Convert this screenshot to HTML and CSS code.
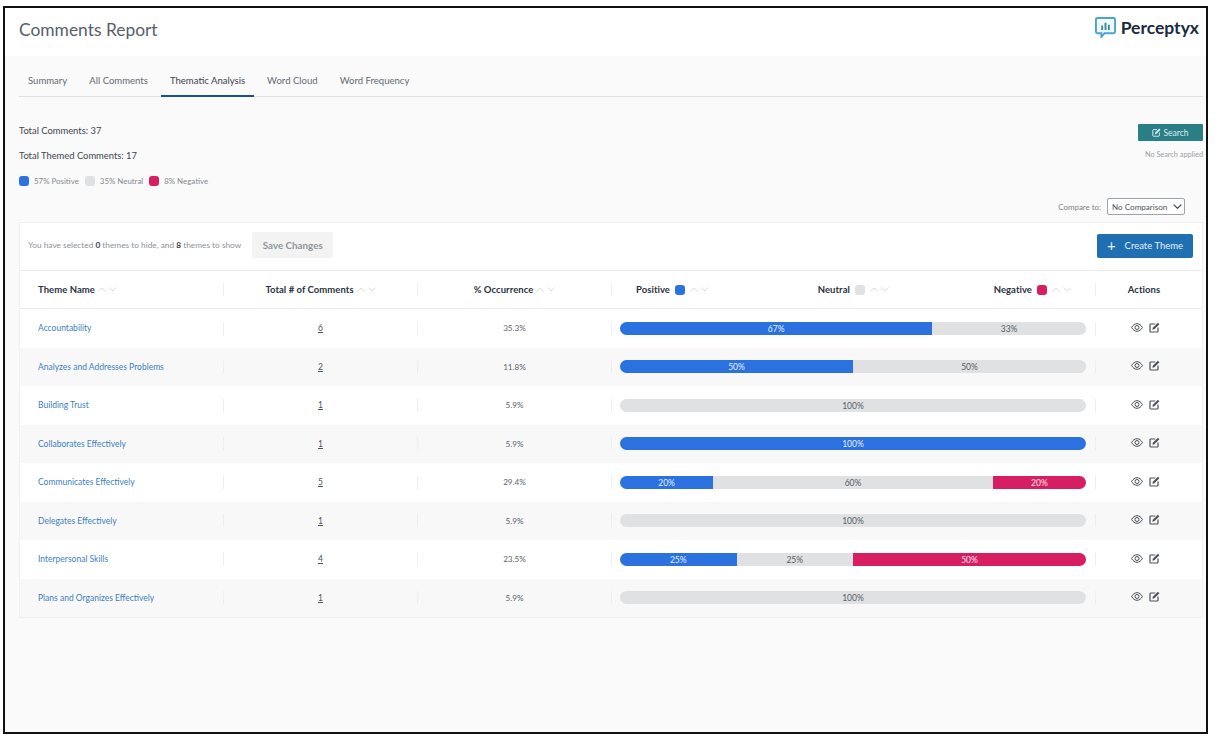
FILE: index.html
```html
<!DOCTYPE html>
<html lang="en">
<head>
<meta charset="utf-8">
<title>Comments Report</title>
<link rel="stylesheet" href="styles.css">
</head>
<body>
<svg class="defs" width="0" height="0" aria-hidden="true">
  <defs>
    <symbol id="up" viewBox="0 0 9 5"><path d="M.5 4.500 4.500.8l4 3.700" fill="none" stroke="currentColor" stroke-width="1"/></symbol>
    <symbol id="down" viewBox="0 0 9 5"><path d="M.5.5l4 3.700 4-3.700" fill="none" stroke="currentColor" stroke-width="1"/></symbol>
    <symbol id="eye" viewBox="0 0 12 9"><path d="M.6 4.500C2 2 3.800.7 6 .7s4 1.300 5.400 3.800C10 7 8.200 8.300 6 8.300S2 7 .6 4.500Z" fill="none" stroke="currentColor" stroke-width="1"/><circle cx="6" cy="4.500" r="2" fill="none" stroke="currentColor" stroke-width="1"/></symbol>
    <symbol id="edit" viewBox="0 0 11 11"><path d="M6.300 2H1.800a.8.8 0 0 0-.8.800v6.400a.8.8 0 0 0 .8.800h6.400a.8.800 0 0 0 .8-.8V5.500" fill="none" stroke="currentColor" stroke-width="1.200"/><path d="M3.800 5.800 8.900.7l1.500 1.500-5.100 5.100-1.900.4Z" fill="currentColor"/></symbol>
  </defs>
</svg>
<div class="frame">
  <header class="top">
    <h1 class="title">Comments Report</h1>
    <div class="logo">
      <svg class="logo-mark" viewBox="0 0 22 22" aria-hidden="true">
        <path d="M2.500 1h17A1.500 1.500 0 0 1 21 2.500v13a1.500 1.500 0 0 1-1.500 1.500H10l-3.300 4v-4H2.500A1.500 1.500 0 0 1 1 15.500v-13A1.500 1.500 0 0 1 2.500 1Z" fill="#f1f8fb" stroke="#4aa5c8" stroke-width="2"/>
        <path d="M6.500 9h2v4.500h-2zM10 6h2v7.500h-2zM13.500 8h2v5.500h-2z" fill="#3f8a96"/>
      </svg>
      <span class="logo-text">Perceptyx</span>
    </div>
  </header>
  <main class="main">
    <nav class="tabs">
      <a class="tab">Summary</a>
      <a class="tab">All Comments</a>
      <a class="tab active">Thematic Analysis</a>
      <a class="tab">Word Cloud</a>
      <a class="tab">Word Frequency</a>
    </nav>
    <section class="summary">
      <div class="totals">
        <p class="total">Total Comments: 37</p>
        <p class="total">Total Themed Comments: 17</p>
        <div class="legend">
          <span class="legend-item"><i class="swatch pos"></i>57% Positive</span>
          <span class="legend-item"><i class="swatch neu"></i>35% Neutral</span>
          <span class="legend-item"><i class="swatch neg"></i>8% Negative</span>
        </div>
      </div>
      <div class="search-box">
        <button class="search-btn"><svg class="i-search"><use href="#edit"/></svg>Search</button>
        <span class="search-note">No Search applied</span>
      </div>
    </section>
    <div class="compare">
      <span class="compare-label">Compare to:</span>
      <div class="select">No Comparison<svg class="select-caret" viewBox="0 0 9 5"><path d="M.6.6l3.900 3.700L8.400.6" fill="none" stroke="currentColor" stroke-width="1.200"/></svg></div>
    </div>
    <section class="card">
      <div class="toolbar">
        <span class="tool-note">You have selected <b>0</b> themes to hide, and <b>8</b> themes to show</span>
        <button class="save-btn">Save Changes</button>
        <button class="create-btn"><span class="plus">+</span>Create Theme</button>
      </div>
      <div class="row head">
        <div class="cell name-cell"><span class="th">Theme Name</span><span class="sort"><svg><use href="#up"/></svg><svg><use href="#down"/></svg></span></div>
        <div class="cell center sep"><span class="th">Total # of Comments</span><span class="sort"><svg><use href="#up"/></svg><svg><use href="#down"/></svg></span></div>
        <div class="cell center sep"><span class="th">% Occurrence</span><span class="sort"><svg><use href="#up"/></svg><svg><use href="#down"/></svg></span></div>
        <div class="cell sep bars-head">
          <span class="bh"><span class="th">Positive</span><i class="swatch pos"></i><span class="sort"><svg><use href="#up"/></svg><svg><use href="#down"/></svg></span></span>
          <span class="bh"><span class="th">Neutral</span><i class="swatch neu"></i><span class="sort"><svg><use href="#up"/></svg><svg><use href="#down"/></svg></span></span>
          <span class="bh"><span class="th">Negative</span><i class="swatch neg"></i><span class="sort"><svg><use href="#up"/></svg><svg><use href="#down"/></svg></span></span>
        </div>
        <div class="cell center sep act-head"><span class="th">Actions</span></div>
      </div>

      <div class="row">
        <div class="cell name-cell"><a class="theme">Accountability</a></div>
        <div class="cell center sep"><a class="count">6</a></div>
        <div class="cell center sep occ">35.3%</div>
        <div class="cell sep bar-cell"><div class="bar"><span class="seg pos" style="width:67%">67%</span><span class="seg neu" style="width:33%">33%</span></div></div>
        <div class="cell center sep acts"><svg class="i-eye"><use href="#eye"/></svg><svg class="i-edit"><use href="#edit"/></svg></div>
      </div>
      <div class="row alt">
        <div class="cell name-cell"><a class="theme">Analyzes and Addresses Problems</a></div>
        <div class="cell center sep"><a class="count">2</a></div>
        <div class="cell center sep occ">11.8%</div>
        <div class="cell sep bar-cell"><div class="bar"><span class="seg pos" style="width:50%">50%</span><span class="seg neu" style="width:50%">50%</span></div></div>
        <div class="cell center sep acts"><svg class="i-eye"><use href="#eye"/></svg><svg class="i-edit"><use href="#edit"/></svg></div>
      </div>
      <div class="row">
        <div class="cell name-cell"><a class="theme">Building Trust</a></div>
        <div class="cell center sep"><a class="count">1</a></div>
        <div class="cell center sep occ">5.9%</div>
        <div class="cell sep bar-cell"><div class="bar"><span class="seg neu" style="width:100%">100%</span></div></div>
        <div class="cell center sep acts"><svg class="i-eye"><use href="#eye"/></svg><svg class="i-edit"><use href="#edit"/></svg></div>
      </div>
      <div class="row alt">
        <div class="cell name-cell"><a class="theme">Collaborates Effectively</a></div>
        <div class="cell center sep"><a class="count">1</a></div>
        <div class="cell center sep occ">5.9%</div>
        <div class="cell sep bar-cell"><div class="bar"><span class="seg pos" style="width:100%">100%</span></div></div>
        <div class="cell center sep acts"><svg class="i-eye"><use href="#eye"/></svg><svg class="i-edit"><use href="#edit"/></svg></div>
      </div>
      <div class="row">
        <div class="cell name-cell"><a class="theme">Communicates Effectively</a></div>
        <div class="cell center sep"><a class="count">5</a></div>
        <div class="cell center sep occ">29.4%</div>
        <div class="cell sep bar-cell"><div class="bar"><span class="seg pos" style="width:20%">20%</span><span class="seg neu" style="width:60%">60%</span><span class="seg neg" style="width:20%">20%</span></div></div>
        <div class="cell center sep acts"><svg class="i-eye"><use href="#eye"/></svg><svg class="i-edit"><use href="#edit"/></svg></div>
      </div>
      <div class="row alt">
        <div class="cell name-cell"><a class="theme">Delegates Effectively</a></div>
        <div class="cell center sep"><a class="count">1</a></div>
        <div class="cell center sep occ">5.9%</div>
        <div class="cell sep bar-cell"><div class="bar"><span class="seg neu" style="width:100%">100%</span></div></div>
        <div class="cell center sep acts"><svg class="i-eye"><use href="#eye"/></svg><svg class="i-edit"><use href="#edit"/></svg></div>
      </div>
      <div class="row">
        <div class="cell name-cell"><a class="theme">Interpersonal Skills</a></div>
        <div class="cell center sep"><a class="count">4</a></div>
        <div class="cell center sep occ">23.5%</div>
        <div class="cell sep bar-cell"><div class="bar"><span class="seg pos" style="width:25%">25%</span><span class="seg neu" style="width:25%">25%</span><span class="seg neg" style="width:50%">50%</span></div></div>
        <div class="cell center sep acts"><svg class="i-eye"><use href="#eye"/></svg><svg class="i-edit"><use href="#edit"/></svg></div>
      </div>
      <div class="row alt">
        <div class="cell name-cell"><a class="theme">Plans and Organizes Effectively</a></div>
        <div class="cell center sep"><a class="count">1</a></div>
        <div class="cell center sep occ">5.9%</div>
        <div class="cell sep bar-cell"><div class="bar"><span class="seg neu" style="width:100%">100%</span></div></div>
        <div class="cell center sep acts"><svg class="i-eye"><use href="#eye"/></svg><svg class="i-edit"><use href="#edit"/></svg></div>
      </div>
    </section>
  </main>
</div>
</body>
</html>
```
FILE: styles.css
```css
* { box-sizing: border-box; }
html, body { height: 100%; }
body {
  margin: 0;
  padding: 6px 0 0 3px;
  background: #fff;
  font-family: "Lato", "Liberation Sans", sans-serif;
  color: #4a5058;
  overflow: hidden;
}
.defs { position: absolute; }
.frame {
  width: 1205px;
  height: 728px;
  border: 2px solid #111;
  display: flex;
  flex-direction: column;
  background: #fafafa;
}
.top {
  height: 48px;
  flex: none;
  background: #fff;
  display: flex;
  align-items: center;
  justify-content: space-between;
  padding: 0 7px 5px 14px;
}
.title {
  margin: 0;
  font-size: 17.400px;
  font-weight: 400;
  color: #56606b;
}
.logo { display: flex; align-items: center; gap: 5px; margin-bottom: 5px; }
.logo-mark { width: 21px; height: 21px; }
.logo-text { font-size: 17.500px; font-weight: 700; color: #1b2a40; }
.main { flex: 1; padding: 0 3px 0 14px; }
.tabs {
  display: flex;
  gap: 4px;
  height: 41px;
  border-bottom: 1px solid #dfe1e3;
}
.tab {
  height: 41px;
  padding: 15.500px 9px 0;
  font-size: 9.550px;
  line-height: 18px;
  color: #636a73;
}
.tab.active { color: #3c4450; border-bottom: 2px solid #15508f; }
.summary {
  display: flex;
  justify-content: space-between;
  padding-top: 25px;
}
.total {
  margin: 0 0 7px;
  font-size: 9.400px;
  line-height: 18px;
  color: #3e4650;
}
.legend { display: flex; gap: 6px; height: 18px; align-items: center; }
.legend-item { display: flex; align-items: center; gap: 5px; font-size: 7.900px; color: #858b92; }
.swatch { display: inline-block; width: 10px; height: 10px; border-radius: 3px; flex: none; }
.swatch.pos { background: #2b72e0; }
.swatch.neu { background: #e0e1e3; }
.swatch.neg { background: #d81e63; }
.search-box { display: flex; flex-direction: column; align-items: flex-end; padding-top: 2px; }
.search-btn {
  width: 65px;
  height: 17px;
  border: 0;
  border-radius: 1px;
  background: #2a7f86;
  color: #dcecee;
  font: 400 8.500px "Lato", sans-serif;
  display: flex;
  align-items: center;
  justify-content: center;
  gap: 2px;
  padding: 0;
}
.i-search { width: 9px; height: 9px; }
.search-note { margin-top: 8px; font-size: 7.300px; line-height: 12px; color: #9a9fa5; }
.compare {
  display: flex;
  justify-content: flex-end;
  align-items: center;
  gap: 6px;
  height: 17px;
  margin-top: 8px;
  padding-right: 18px;
}
.compare-label { font-size: 7.900px; color: #7c828a; }
.select {
  width: 78px;
  height: 17px;
  border: 1px solid #9ea3a8;
  border-radius: 2px;
  background: #fff;
  display: flex;
  align-items: center;
  justify-content: space-between;
  padding: 0 2px 0 4px;
  font-size: 8.100px;
  color: #4c535b;
}
.select-caret { width: 9px; height: 5px; color: #3f4650; }
.card {
  margin-top: 7px;
  background: #fff;
  border: 1px solid #f0f0f1;
  height: 396px;
}
.toolbar {
  height: 48px;
  display: flex;
  align-items: center;
  padding: 0 9px 4px 8px;
  border-bottom: 1px solid #ececee;
}
.tool-note { font-size: 8.300px; color: #8d9298; }
.tool-note b { color: #3c4450; }
.save-btn {
  margin-left: 11px;
  width: 81px;
  height: 26px;
  border: 0;
  border-radius: 2px;
  background: #f3f3f4;
  color: #90959b;
  font: 700 9.800px "Lato", sans-serif;
  padding: 0;
}
.create-btn {
  margin: 2px 0 0 auto;
  width: 96px;
  height: 24px;
  border: 0;
  border-radius: 2px;
  background: #1f6fb2;
  color: #e6f0f8;
  font: 400 9.500px "Lato", sans-serif;
  display: flex;
  align-items: center;
  justify-content: center;
  gap: 9px;
  padding: 0;
}
.plus { font-size: 15px; line-height: 15px; }
.row {
  display: grid;
  grid-template-columns: 203px 194px 194px 484px 1fr;
  height: 38.500px;
  align-items: center;
}
.row.alt { background: #f8f8f9; }
.row.head { height: 38px; border-bottom: 1px solid #ececee; }
.cell {
  height: 13px;
  display: flex;
  align-items: center;
  font-size: 8.500px;
}
.name-cell { padding-left: 18px; }
.center { justify-content: center; }
.sep { border-left: 1px solid #eeeef0; }
.th { font-size: 9.500px; font-weight: 700; color: #2a3240; letter-spacing: .05px; white-space: nowrap; }
.sort { display: inline-flex; gap: 3px; margin-left: 3px; color: #d3d6d9; }
.sort svg { width: 8px; height: 5px; }
.bars-head { justify-content: space-between; padding: 0 24px 0 24px; }
.bh { display: flex; align-items: center; gap: 5px; }
.bh:nth-child(2) { margin-left: 4px; }
.bh .sort { margin-left: 0; }
.act-head { padding-right: 10px; }
.theme { color: #3c7fbe; font-size: 8.500px; }
.count { color: #4a5058; text-decoration: underline; }
.occ { color: #5c636b; font-size: 8.200px; }
.bar-cell { padding: 0 9px 0 8px; }
.bar {
  width: 100%;
  height: 13px;
  display: flex;
  border-radius: 6.500px;
  overflow: hidden;
  background: #e0e1e3;
}
.seg {
  display: flex;
  align-items: center;
  justify-content: center;
  padding-top: 1px;
  font-size: 8.500px;
  line-height: 12px;
}
.seg.pos { background: #2b72e0; color: #e8f0fc; }
.seg.neu { background: #e0e1e3; color: #555c64; }
.seg.neg { background: #d81e63; color: #fbe6ee; }
.acts { gap: 6px; color: #4a5058; padding: 0 7px 2px 0; }
.i-eye { width: 12px; height: 9px; }
.i-edit { width: 11px; height: 11px; }
```
